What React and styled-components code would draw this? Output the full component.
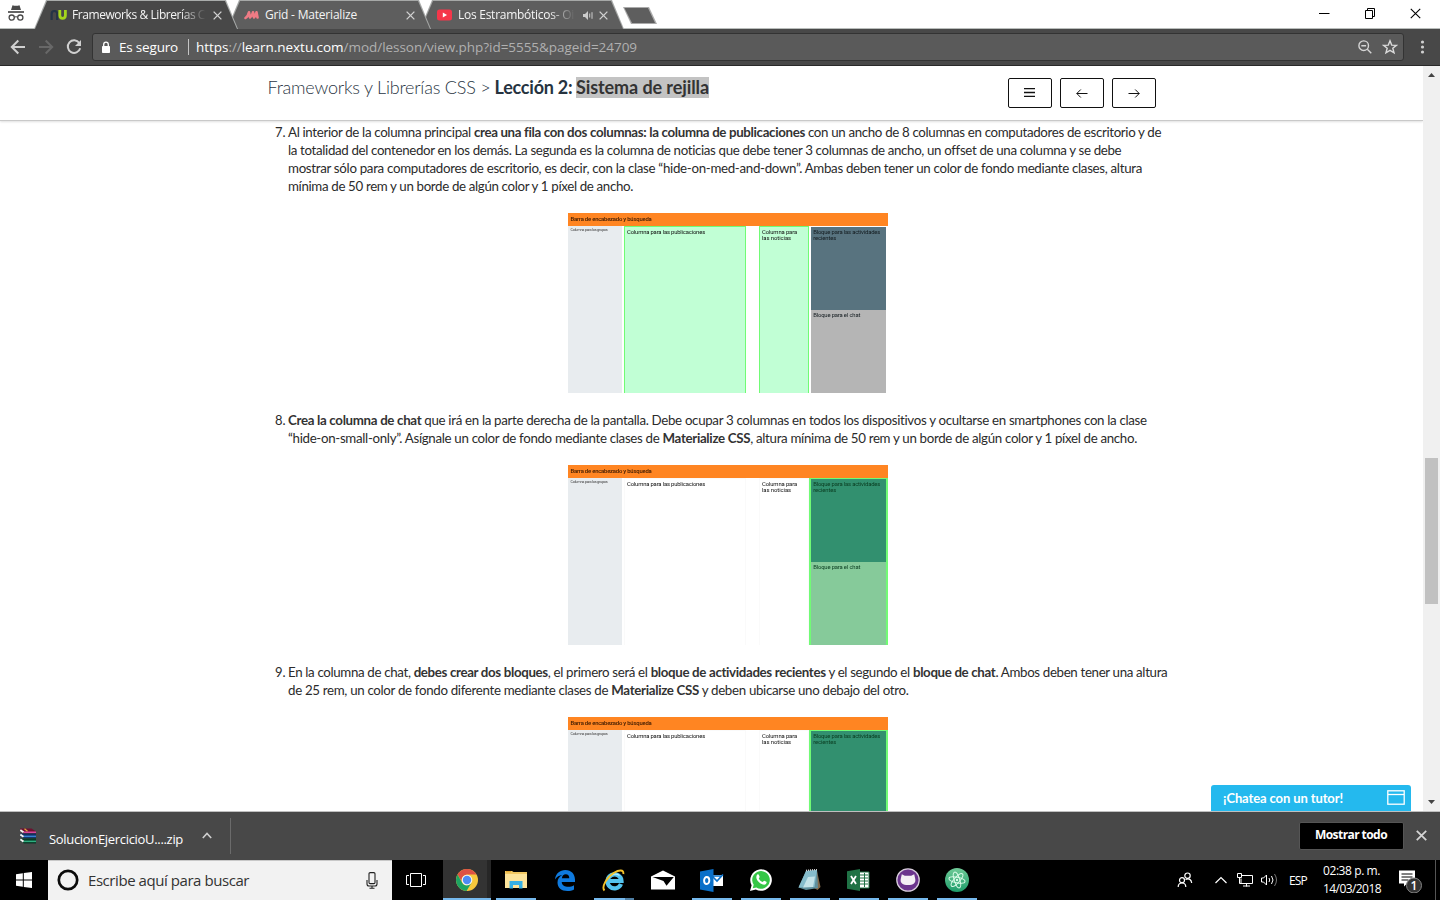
import React, { useLayoutEffect, useRef, useState } from 'react';
import styled, { createGlobalStyle, css } from 'styled-components';

const Global = createGlobalStyle`
  * { box-sizing: border-box; }
  html, body { margin: 0; overflow: hidden; background: #fff; }
  svg { display: block; flex: none; }
`;
const UI = '"Segoe UI", "Open Sans", "Noto Sans", sans-serif';
const LATO = 'Lato, "Liberation Sans", sans-serif';

const FitBox = styled.span`
  display: block;
  width: max-content;
  white-space: nowrap;
`;
// Tracks a line of text out or in so that it fills the given width.
function Fit({ width, children, className }) {
  const ref = useRef(null);
  const [spacing, setSpacing] = useState(0);
  useLayoutEffect(() => {
    const el = ref.current;
    setSpacing((width - el.getBoundingClientRect().width) / el.textContent.length);
  }, [width]);
  return <FitBox ref={ref} className={className} style={{ letterSpacing: `${spacing}px` }}>{children}</FitBox>;
}

const Window = styled.div`
  width: 1440px; height: 900px; overflow: hidden;
  display: flex; flex-direction: column; background: #fff;
  font-family: ${UI};
`;

/* ---- tab strip ---- */
const TabStrip = styled.div`
  height: 29px; flex: none; display: flex; align-items: flex-start;
  border-bottom: 1px solid #b9bdbb; position: relative;
`;
const Incognito = styled.div` width: 34px; height: 28px; padding: 4px 0 0 7px; `;
const TabEdge = styled.div`
  width: 204px; height: 29px; flex: none; margin-right: -11px;
  position: relative; z-index: ${p => p.$z};
  background: ${p => (p.$active ? '#a9acab' : '#a6a8a7')};
  clip-path: polygon(0 100%, 12px 0, 192px 0, 100% 100%);
`;
const TabBody = styled.div`
  height: 29px; display: flex; align-items: center; padding: 1px 0 0 16px;
  background: ${p => (p.$active ? '#484848' : '#5e5e5e')};
  clip-path: polygon(1px 100%, 13px 1px, 191px 1px, 203px 100%);
`;
const Favicon = styled.div` width: 17px; display: flex; justify-content: center; `;
const TabTitle = styled.div`
  width: ${p => p.$w}px; margin-left: 5px; overflow: hidden; color: #f4f4f4;
  font-size: 12px; line-height: 16px;
  ${p => p.$fade && css`mask-image: linear-gradient(90deg, #000 calc(100% - 26px), transparent);`}
`;
const CloseSlot = styled.div` margin-left: auto; padding-right: 16.5px; display: flex; gap: 6px; align-items: center; `;
const NewTab = styled.div`
  width: 34px; height: 17px; margin: 7px 0 0 10px; flex: none;
  background: #aaa; clip-path: polygon(0 0, 26px 0, 100% 100%, 8px 100%);
  &::after { content: ''; display: block; height: 17px; background: #5e5e5e;
    clip-path: polygon(1.5px 1px, 25px 1px, 32px 16px, 9px 16px); }
`;
const WindowButtons = styled.div`
  margin-left: auto; height: 27px; display: flex; padding-right: 19.5px; gap: 34px; align-items: center;
`;

/* ---- toolbar ---- */
const Toolbar = styled.div`
  height: 37px; flex: none; background: #484848; border-bottom: 1px solid #292929;
  display: flex; align-items: center; padding: 0 14px 0 10px;
`;
const NavIcons = styled.div` display: flex; gap: 12px; width: 82px; `;
const Omnibox = styled.div`
  width: 1312px; height: 28px; border: 1px solid #333; border-radius: 3px; background: #5a5a5a;
  display: flex; align-items: center; padding: 0 5px 0 8px; font-size: 13.5px; color: #fff;
`;
const Secure = styled.div` width: 69px; margin-left: 8px; `;
const Rule = styled.div` width: 1px; height: 16px; background: #c4c4c4; margin-right: 7px; `;
const Url = styled.div` color: #b0b0b0; b { font-weight: 400; color: #fff; } `;
const OmniIcons = styled.div` margin-left: auto; display: flex; gap: 9px; align-items: center; `;
const Menu = styled.div` margin-left: auto; `;

/* ---- page ---- */
const Viewport = styled.div` height: 745px; flex: none; display: flex; overflow: hidden; position: relative; `;
const Page = styled.div` width: 1423px; height: 745px; overflow: hidden; font-family: ${LATO}; color: #2b2b2b; `;
const PageHeader = styled.header`
  height: 55px; border-bottom: 1px solid #c9c9c9; box-shadow: 0 1px 2px rgba(0,0,0,.12);
  display: flex; padding-left: 267.5px;
`;
const Crumbs = styled.h1`
  margin: 11px 0 0; width: 740.5px; height: 21px; display: flex; font-size: 18px; line-height: 21px; font-weight: 300; color: #2a3644;
`;
const CrumbCourse = styled.div` width: 227px; `;
const CrumbLesson = styled.div` width: 81.5px; font-weight: 700; color: #26333f; `;
const Selected = styled.div` height: 21px; background: #c3c3c3; font-weight: 700; color: #333; `;
const HeaderButtons = styled.div` display: flex; gap: 8px; padding-top: 12px; `;
const HeaderButton = styled.button`
  width: 44px; height: 30px; padding: 0 1px 1px 0; border: 1px solid #111; border-radius: 2px; background: #fff;
  display: flex; align-items: center; justify-content: center;
`;
const Steps = styled.div` padding: 2px 0 0 272px; `;
const Step = styled.section` display: flex; margin-bottom: 18px; `;
const StepNumber = styled.div` width: 16px; padding-left: 3px; font-size: 13px; line-height: 18px; `;
const StepBody = styled.div` width: 880px; font-size: 13.3px; line-height: 18px; b { font-weight: 700; color: #333; } `;
const Figure = styled.div` margin: 18px 0 0 280px; `;

/* ---- wireframe figure ---- */
const Wire = styled.div`
  width: 320px; height: 180px; background: #fff; font: 400 5.9px/6.3px Roboto, sans-serif; color: #111; overflow: hidden;
`;
const WireBar = styled.div`
  height: 13px; background: #ff8522; padding: 2.7px 0 0 2.5px; color: #3c1a02; font-weight: 500;
`;
const WireRow = styled.div` display: flex; height: 167px; `;
const WireGroups = styled.div` width: 54px; background: #e8ecef; padding: 1px 0 0 2.5px; font-size: 3.9px; line-height: 5px; color: #444; `;
const WireCol = styled.div`
  width: ${p => p.$w}px; margin-left: ${p => p.$ml}px; padding: 2.2px 0 0 2px;
  border: solid ${p => (p.$on ? '#71fb75' : '#fafafa')}; border-width: 1px 1px 0;
  background: ${p => (p.$on ? '#c1ffd5' : '#fff')};
`;
const WireChat = styled.div`
  width: 79px; border: solid ${p => (p.$on ? '#71fb75' : '#fff')}; border-width: 1px 2px 0;
  color: ${p => (p.$on ? '#0a3d21' : '#141c20')};
`;
const WireBlock = styled.div` height: 83px; padding: 2.2px 0 0 2.2px; background: ${p => p.$c}; `;
const Soft = styled.div` filter: blur(.3px); white-space: nowrap; `;

function Wireframe({ chat }) {
  return (
    <Wire>
      <WireBar><Soft><Fit width={81}>Barra de encabezado y búsqueda</Fit></Soft></WireBar>
      <WireRow>
        <WireGroups><Soft><Fit width={37}>Columna para los grupos</Fit></Soft></WireGroups>
        <WireCol $w={122} $ml={2} $on={!chat}><Soft><Fit width={78}>Columna para las publicaciones</Fit></Soft></WireCol>
        <WireCol $w={50} $ml={13} $on={!chat}><Soft><Fit width={35}>Columna para</Fit><Fit width={29}>las noticias</Fit></Soft></WireCol>
        <WireChat $on={chat}>
          <WireBlock $c={chat ? '#32906f' : '#58737f'}><Soft><Fit width={67}>Bloque para las actividades</Fit><Fit width={23}>recientes</Fit></Soft></WireBlock>
          <WireBlock $c={chat ? '#86ca9a' : '#b5b5b5'}><Soft><Fit width={47}>Bloque para el chat</Fit></Soft></WireBlock>
        </WireChat>
      </WireRow>
    </Wire>
  );
}

const Scrollbar = styled.div`
  width: 17px; height: 745px; background: #f0f0f0; display: flex; flex-direction: column; align-items: center;
  padding: 6px 0; svg:last-child { margin-top: auto; }
`;
const Thumb = styled.div` width: 13px; height: 146px; margin-top: 381px; background: #c1c1c1; `;
const ChatTab = styled.div`
  position: absolute; left: 1211px; bottom: 0; width: 200px; height: 26px; background: #24b9ee; border-radius: 3px 3px 0 0;
  display: flex; align-items: center; justify-content: space-between; padding: 0 6px 0 12px;
  font: 700 13px/18px ${LATO}; color: #fff;
`;

/* ---- downloads ---- */
const Downloads = styled.div`
  height: 49px; flex: none; background: #484848; border-top: 1px solid #bfbfbf;
  display: flex; align-items: center; padding: 0 13px 1px 20px; color: #fff; font-size: 13px;
`;
const FileName = styled.div` margin: 6px 19px 0 13px; `;
const DownloadRule = styled.div` width: 1px; height: 36px; background: #6b6b6b; margin-left: 18px; `;
const ShowAll = styled.button`
  margin: 0 12px 0 auto; width: 105px; height: 28px; background: #000; border: 1px solid #555; border-radius: 2px; padding: 0 1px 1px 0;
  color: #fff; font: 700 12px/16px ${UI}; display: flex; align-items: center; justify-content: center;
`;

/* ---- taskbar ---- */
const Taskbar = styled.div` height: 40px; flex: none; background: #000; display: flex; color: #fff; `;
const Start = styled.div` width: 48px; display: flex; align-items: center; justify-content: center; `;
const Search = styled.div`
  width: 344px; background: #f2f2f2; border-top: 1px solid #c8c8c8; display: flex; align-items: center;
  padding: 0 14px 1px 9px; color: #333; font-size: 15px;
`;
const SearchText = styled.div` margin: 0 auto 0 9px; `;
const TaskView = styled.div` width: 51px; display: flex; align-items: center; padding-left: 14px; `;
const TaskApp = styled.div`
  width: 49px; height: 40px; display: flex; align-items: center; justify-content: center;
  padding-right: 2px; position: relative;
  ${p => p.$active && css`background: linear-gradient(90deg, #333 44px, #262626 44px 48px, #000 48px);`}
  &::after {
    content: ''; position: absolute; bottom: 0; height: 2px; background: #76b9ed;
    left: ${p => (p.$active ? 0 : 4)}px; width: ${p => (p.$active ? 48 : 40)}px;
    display: ${p => (p.$open || p.$active ? 'block' : 'none')};
    ${p => p.$stack && css`background: linear-gradient(90deg, #76b9ed 31px, #4f7fa5 31px);`}
  }
`;
const Tray = styled.div` margin-left: auto; width: 264px; display: flex; align-items: center; `;
const TrayGap = styled.div` width: ${p => p.$w}px; flex: none; `;
const Lang = styled.div` font-size: 12px; width: 34px; `;
const Clock = styled.div` font-size: 12px; line-height: 18px; width: 75px; `;
const Desktop = styled.div` margin-left: auto; width: 5px; height: 40px; border-left: 1px solid #555; `;

const Close = ({ s = 9, c = '#cfcfcf', w = 1.5 }) => (
  <svg width={s} height={s} viewBox="0 0 10 10"><path d="M.7.7l8.6 8.6M9.3.7L.7 9.3" stroke={c} strokeWidth={w} fill="none" /></svg>
);
const Arrow = ({ c, flip }) => (
  <svg width="16" height="16" viewBox="0 0 16 16"><path transform={flip ? 'translate(16 0) scale(-1 1)' : undefined} d="M15 8H2.2M8.3 1.5L1.8 8l6.5 6.5" stroke={c} strokeWidth="2" fill="none" /></svg>
);
const ThinArrow = ({ flip }) => (
  <svg width="12" height="10" viewBox="0 0 12 10"><path transform={flip ? 'translate(12 0) scale(-1 1)' : undefined} d="M11.5 5.5H.8M4.8 1.5l-4 4 4 4" stroke="#111" fill="none" /></svg>
);

function Tabs() {
  return (
    <TabStrip>
      <Incognito>
        <svg width="18" height="18" viewBox="0 0 18 18" fill="none" stroke="#4a4a4a">
          <path d="M5.5 1.2q3.5 1 7 0l1.500 4.800H4z" fill="#4a4a4a" stroke="none" /><path d="M1 8h16" strokeWidth="1.7" />
          <circle cx="4.7" cy="13.6" r="2.6" strokeWidth="1.3" /><circle cx="13.3" cy="13.6" r="2.6" strokeWidth="1.3" /><path d="M7.3 13.2q1.7-1 3.4 0" />
        </svg>
      </Incognito>
      <TabEdge $active $z={3}><TabBody $active>
        <Favicon><svg width="17" height="12" viewBox="0 0 17 12" fill="none" strokeWidth="2.8">
          <path d="M1.6 11V5.2Q1.6 2 4.4 2T7.2 5.2V11" stroke="#243447" strokeWidth="2.2" /><path d="M9.8 1v5.3q0 3 2.8 3t2.8-3V1" stroke="#a4d51c" />
        </svg></Favicon>
        <TabTitle $w={134} $fade><Fit width={133}>Frameworks &amp; Librerías C</Fit></TabTitle><CloseSlot><Close /></CloseSlot>
      </TabBody></TabEdge>
      <TabEdge $z={2}><TabBody>
        <Favicon><svg width="15" height="10" viewBox="0 0 15 10" fill="none" stroke="#ee7b85" strokeWidth="2.6" strokeLinejoin="round" strokeLinecap="round">
          <path d="M1.5 8Q4 6.5 5 2.200L6 7.5Q8.200 6 9 2.200L10 7.5Q12 5 12.500 2.200L13.500 7.500" />
        </svg></Favicon>
        <TabTitle $w={130}><Fit width={92}>Grid - Materialize</Fit></TabTitle><CloseSlot><Close /></CloseSlot>
      </TabBody></TabEdge>
      <TabEdge $z={1}><TabBody>
        <Favicon><svg width="15" height="12" viewBox="0 0 15 12"><rect width="15" height="11" y=".5" rx="2.5" fill="#f5364a" /><path d="M5.8 3.5L10 6 5.8 8.5z" fill="#fff" /></svg></Favicon>
        <TabTitle $w={117} $fade><Fit width={116}>Los Estrambóticos- Oi</Fit></TabTitle>
        <CloseSlot>
          <svg width="10" height="9" viewBox="0 0 10 9"><path d="M0 3h2l3-3v9L2 6H0z" fill="#ccc" /><path d="M6.7 2.5v4M9 1.2v6.6" stroke="#ccc" /></svg>
          <Close />
        </CloseSlot>
      </TabBody></TabEdge>
      <NewTab />
      <WindowButtons>
        <svg width="11" height="11"><path d="M0 5.5h10.5" stroke="#000" /></svg>
        <svg width="12" height="11" viewBox="0 0 12 11" fill="none" stroke="#000"><path d="M1.5 2.5h7v8h-7zM3.5 2.5v-2h7v8h-2" /></svg>
        <Close s={11} c="#000" w={1} />
      </WindowButtons>
    </TabStrip>
  );
}

function AddressBar() {
  return (
    <Toolbar>
      <NavIcons>
        <Arrow c="#d0d0d0" /><Arrow c="#686868" flip />
        <svg width="16" height="16" viewBox="0 0 16 16"><path d="M13.3 4A6.3 6.3 0 1 0 14.2 9.3" stroke="#d0d0d0" strokeWidth="2" fill="none" /><path d="M15 1v6H9z" fill="#d0d0d0" /></svg>
      </NavIcons>
      <Omnibox>
        <svg width="10" height="13" viewBox="0 0 10 13"><rect x="1" y="5" width="8" height="7" rx=".8" fill="#fff" /><path d="M2.7 5.5V3.5a2.3 2.3 0 0 1 4.6 0v2" stroke="#fff" strokeWidth="1.3" fill="none" /></svg>
        <Secure><Fit width={59}>Es seguro</Fit></Secure><Rule />
        <Url><Fit width={441}><b>https</b>://<b>learn.nextu.com</b>/mod/lesson/view.php?id=5555&amp;pageid=24709</Fit></Url>
        <OmniIcons>
          <svg width="16" height="16" viewBox="0 0 16 16" fill="none" stroke="#d5d5d5" strokeWidth="1.4"><circle cx="6.7" cy="6.7" r="4.8" /><path d="M4.3 6.7h4.8M10.3 10.3l4 4" /></svg>
          <svg width="16" height="16" viewBox="0 0 16 16" fill="none" stroke="#dadada" strokeWidth="1.4"><path d="M8 1.8l1.7 4.3 4.7.3-3.6 2.9 1.2 4.5L8 11.3l-4 2.5 1.2-4.5L1.6 6.4l4.7-.3z" /></svg>
        </OmniIcons>
      </Omnibox>
      <Menu><svg width="8" height="16" viewBox="0 0 8 16" fill="#d0d0d0"><circle cx="4.5" cy="3" r="1.6" /><circle cx="4.5" cy="8" r="1.6" /><circle cx="4.5" cy="13" r="1.6" /></svg></Menu>
    </Toolbar>
  );
}

const steps = [
  { n: 7, chat: false, lines: [
    [873, <>Al interior de la columna principal <b>crea una fila con dos columnas: la columna de publicaciones</b> con un ancho de 8 columnas en computadores de escritorio y de</>],
    [833, 'la totalidad del contenedor en los demás. La segunda es la columna de noticias que debe tener 3 columnas de ancho, un offset de una columna y se debe'],
    [854, 'mostrar sólo para computadores de escritorio, es decir, con la clase “hide-on-med-and-down”. Ambas deben tener un color de fondo mediante clases, altura'],
    [345, 'mínima de 50 rem y un borde de algún color y 1 píxel de ancho.'],
  ] },
  { n: 8, chat: true, lines: [
    [859, <><b>Crea la columna de chat</b> que irá en la parte derecha de la pantalla. Debe ocupar 3 columnas en todos los dispositivos y ocultarse en smartphones con la clase</>],
    [849, <>“hide-on-small-only”. Asígnale un color de fondo mediante clases de <b>Materialize CSS</b>, altura mínima de 50 rem y un borde de algún color y 1 píxel de ancho.</>],
  ] },
  { n: 9, chat: true, lines: [
    [879.5, <>En la columna de chat, <b>debes crear dos bloques</b>, el primero será el <b>bloque de actividades recientes</b> y el segundo el <b>bloque de chat</b>. Ambos deben tener una altura</>],
    [620.5, <>de 25 rem, un color de fondo diferente mediante clases de <b>Materialize CSS</b> y deben ubicarse uno debajo del otro.</>],
  ] },
];

function Lesson() {
  return (
    <Viewport>
      <Page>
        <PageHeader>
          <Crumbs>
            <CrumbCourse><Fit width={223}>Frameworks y Librerías CSS &gt;</Fit></CrumbCourse>
            <CrumbLesson><Fit width={78}>Lección 2:</Fit></CrumbLesson>
            <Selected><Fit width={133}>Sistema de rejilla</Fit></Selected>
          </Crumbs>
          <HeaderButtons>
            <HeaderButton><svg width="11" height="9"><path d="M0 .5h11M0 4.5h11M0 8.5h11" stroke="#111" strokeWidth="1.4" /></svg></HeaderButton>
            <HeaderButton><ThinArrow /></HeaderButton>
            <HeaderButton><ThinArrow flip /></HeaderButton>
          </HeaderButtons>
        </PageHeader>
        <Steps>
          {steps.map(s => (
            <Step key={s.n}>
              <StepNumber>{s.n}.</StepNumber>
              <StepBody>
                {s.lines.map(([w, t], i) => <Fit key={i} width={w}>{t}</Fit>)}
                <Figure><Wireframe chat={s.chat} /></Figure>
              </StepBody>
            </Step>
          ))}
        </Steps>
      </Page>
      <Scrollbar>
        <svg width="7" height="5"><path d="M0 5L3.5 1 7 5z" fill="#444" /></svg>
        <Thumb />
        <svg width="7" height="5"><path d="M0 0L3.5 4 7 0z" fill="#444" /></svg>
      </Scrollbar>
      <ChatTab><Fit width={120}>¡Chatea con un tutor!</Fit>
        <svg width="18" height="16" fill="none" stroke="#fff"><rect x=".8" y=".8" width="16.4" height="13.4" strokeWidth="1.3" /><path d="M1 4.5h16" strokeWidth="1.3" /></svg>
      </ChatTab>
    </Viewport>
  );
}

function DownloadBar() {
  return (
    <Downloads>
      <svg width="16" height="16" viewBox="0 0 16 16">
        <path d="M0 .5h11.500L16 3.500V5.500H4L0 3z" fill="#6d1030" /><path d="M3.500 3.500H16v1.500H3.500z" fill="#d8479b" />
        <path d="M0 5.500h3.500L16 5.500V10.300H4L0 8z" fill="#122f63" /><path d="M3.500 7.600H16v1.500H3.500z" fill="#3a82cf" />
        <path d="M0 10.500L16 10.300V15.600H4L0 13z" fill="#083a26" /><path d="M3.500 12.600H16v1.500H3.500z" fill="#2fae80" />
        <path d="M.3 2l3.200 2.200M.3 6.600l3.200 2.200M.3 11.400l3.200 2.200" stroke="#f2f2f2" strokeWidth="1.900" /><path d="M4.500.7l3 2.500" stroke="#e3a53c" strokeWidth="1.200" />
      </svg>
      <FileName><Fit width={134}>SolucionEjercicioU....zip</Fit></FileName>
      <svg width="10" height="7" viewBox="0 0 10 7"><path d="M.8 6L5 1.5 9.2 6" stroke="#cfcfcf" strokeWidth="1.6" fill="none" /></svg>
      <DownloadRule />
      <ShowAll><Fit width={72}>Mostrar todo</Fit></ShowAll>
      <Close s={11} c="#d5d5d5" w={1.6} />
    </Downloads>
  );
}

const ChromeIcon = () => (
  <svg width="22" height="22" viewBox="0 0 22 22"><circle cx="11" cy="11" r="11" fill="#f7c83c" /><path d="M1.5 5.5A11 11 0 0 1 20.5 5.5H11A5.5 5.5 0 0 0 6 13z" fill="#dd5144" /><path d="M1.5 5.5A11 11 0 0 0 10.5 22l5-8.2-4.5 2.7a5.5 5.5 0 0 1-5-3z" fill="#1da462" /><circle cx="11" cy="11" r="5.3" fill="#f4f4f4" /><circle cx="11" cy="11" r="4.2" fill="#4c8bf5" /></svg>
);
const FolderIcon = () => (
  <svg width="22" height="20" viewBox="0 0 22 20"><path d="M0 1h7l1.5 1H22v16H0z" fill="#f2c862" /><path d="M0 4h22v14H0z" fill="#fde49b" /><path d="M4.5 18.5V11h13v7.5h-3.5V15H8v3.5z" fill="#36b0e4" /><path d="M1 1h5v1.2H1z" fill="#e6aa32" /></svg>
);
const EdgeIcon = () => (
  <svg width="20" height="21" viewBox="0 0 20 21"><path d="M0 9.5C.6 3.5 5 0 10.3 0 16.5 0 20 4.3 20 9.8V12H6.7c.2 3.3 3.3 4.8 6.5 4.8 2.3 0 4.2-.6 5.8-1.6v4.3C17.2 20.5 14.900 21 12.4 21 6.3 21 2.5 17.6 2.5 12.5c0-3.300 1.900-6 4.800-7.400C4.4 5.300 1.600 7 0 9.500zM6.900 8.200h7.400c0-2.500-1.300-4-3.500-4S7.200 5.800 6.900 8.200z" fill="#0f7ade" fillRule="evenodd" /></svg>
);
const IEIcon = () => (
  <svg width="23" height="23" viewBox="0 0 23 23" fill="none"><path d="M19 15a7 7 0 1 1 .5-3H7" stroke="#54c4ef" strokeWidth="4.2" /><path d="M17.5 6.500a7.500 7.500 0 0 0-11 3" stroke="#b5ebfb" strokeWidth="1.2" /><path d="M2.5 21.5C-1 18 5 8 12 3.7 17 .8 22 .3 21.3 5" stroke="#f5c229" strokeWidth="1.9" /></svg>
);
const MailIcon = () => (
  <svg width="24" height="20" viewBox="0 0 24 20"><path d="M0 6.5L12 .5l12 6V19.5H0z" fill="#fff" /><path d="M1.5 7h21.3L15.5 15.800 12.500 11z" fill="#000" /></svg>
);
const OutlookIcon = () => (
  <svg width="24" height="23" viewBox="0 0 24 23"><path d="M11 6h12v11H11z" fill="#fff" /><path d="M12 7h10M13 8l4 4 6-6.5" stroke="#0b70c8" strokeWidth="1.6" fill="none" /><path d="M0 2.5L13.5 0v23L0 20.5z" fill="#0a70c9" /><ellipse cx="6.7" cy="11.5" rx="2.6" ry="3.5" fill="none" stroke="#fff" strokeWidth="1.9" /></svg>
);
const WhatsIcon = () => (
  <svg width="22" height="22" viewBox="0 0 22 22"><path d="M0 22l1.6-5.700A10.8 10.8 0 1 1 5.8 20.500z" fill="#fff" /><path d="M2.7 19.3l1-3.500A8.8 8.8 0 1 1 6.4 18.400z" fill="#35c747" /><path d="M7.3 5.600c.6-.5 1.200-.4 1.500.2l.8 2c.2.5-.8 1.300-.8 1.600.8 1.700 2.200 2.800 3.900 3.500.5 0 1.100-1.400 1.600-1.200l2.100 1c.6.4 0 2.100-.8 2.600-1.500.9-3.900.2-6.300-1.800C6.500 11.100 5.300 8.200 7.300 5.600z" fill="#fff" /></svg>
);
const NotepadIcon = () => (
  <svg width="24" height="22" viewBox="0 0 24 22"><path d="M19 2l3.5 16-3 3L16 19z" fill="#83694a" /><path d="M8 2l11-1 1 18-12 2-7.5-2.5z" fill="#5f8f9c" /><path d="M8 2l11-1-2.500 17-16 .5z" fill="#86bccb" /><path d="M10 8l7-.5L15 18l-10 .5z" fill="#d5ecef" opacity=".8" /><path d="M8 1.5l11-1" stroke="#d9d9d9" strokeDasharray="1 1" strokeWidth="1.6" /></svg>
);
const ExcelIcon = () => (
  <svg width="23" height="22" viewBox="0 0 23 22"><path d="M12 3h10v16H12z" fill="#fff" stroke="#1f7245" /><path d="M13 6h8M13 9h8M13 12h8M13 15h8M17.5 4v14" stroke="#1f7245" /><path d="M0 2.3L13 0v22L0 19.7z" fill="#1f7245" /><path d="M4 7l5 8M9 7l-5 8" stroke="#fff" strokeWidth="1.8" /></svg>
);
const GithubIcon = () => (
  <svg width="24" height="24" viewBox="0 0 24 24"><circle cx="12" cy="12" r="11.2" fill="#6b348d" stroke="#d5cbd9" strokeWidth="1.3" /><path d="M5.8 6.2l3 1.600h6.400l3-1.600.9 4c1.300 5-2 6.800-7.100 6.800s-8.400-1.800-7.100-6.800z" fill="#f3eef4" /></svg>
);
const AtomIcon = () => (
  <svg width="24" height="24" viewBox="0 0 24 24" fill="none" stroke="#dcfbe9" strokeWidth="1">
    <defs><linearGradient id="disc" x2="0" y2="1"><stop stopColor="#70cb98" /><stop offset="1" stopColor="#1e9d6a" /></linearGradient></defs>
    <circle cx="12" cy="12" r="12" fill="url(#disc)" stroke="none" />
    <ellipse cx="12" cy="12" rx="8.2" ry="2.7" transform="rotate(12 12 12)" /><ellipse cx="12" cy="12" rx="8.2" ry="2.7" transform="rotate(72 12 12)" /><ellipse cx="12" cy="12" rx="8.2" ry="2.7" transform="rotate(132 12 12)" />
    <circle cx="12" cy="12" r="1.2" fill="#dcfbe9" stroke="none" />
  </svg>
);

const apps = [
  { id: 'chrome', icon: <ChromeIcon />, active: true }, { id: 'files', icon: <FolderIcon />, open: true },
  { id: 'edge', icon: <EdgeIcon /> }, { id: 'ie', icon: <IEIcon />, open: true, stack: true }, { id: 'mail', icon: <MailIcon /> },
  { id: 'outlook', icon: <OutlookIcon />, open: true }, { id: 'whatsapp', icon: <WhatsIcon />, open: true },
  { id: 'notepad', icon: <NotepadIcon />, open: true }, { id: 'excel', icon: <ExcelIcon />, open: true },
  { id: 'github', icon: <GithubIcon />, open: true }, { id: 'atom', icon: <AtomIcon />, open: true },
];

function TaskbarRow() {
  return (
    <Taskbar>
      <Start><svg width="16" height="16" viewBox="0 0 16 16" fill="#fff"><path d="M0 2.2L6.8 1.3v6.2H0zM7.8 1.1L16 0v7.5H7.800zM0 8.5h6.800v6.200L0 13.800zM7.800 8.500H16V16l-8.200-1.100z" /></svg></Start>
      <Search>
        <svg width="22" height="22"><circle cx="11" cy="11" r="9.2" fill="none" stroke="#0b0b0b" strokeWidth="2.7" /></svg>
        <SearchText><Fit width={161}>Escribe aquí para buscar</Fit></SearchText>
        <svg width="12" height="17" viewBox="0 0 12 17" fill="none" stroke="#222" strokeWidth="1.1"><rect x="3" y=".6" width="6" height="11" rx="1.2" /><path d="M1 8v4q0 2 2 2h6q2 0 2-2V8M6 14v2.3M3.5 16.3h5" /></svg>
      </Search>
      <TaskView><svg width="20" height="14" fill="none" stroke="#fff"><path d="M4.5.5h11v13h-11zM3 2.5H.5v9H3M17 2.5h2.5v9H17" /></svg></TaskView>
      {apps.map(a => <TaskApp key={a.id} $active={a.active} $open={a.open} $stack={a.stack}>{a.icon}</TaskApp>)}
      <Tray>
        <TrayGap $w={1} />
        <svg width="16" height="16" viewBox="0 0 16 16" fill="none" stroke="#fff" strokeWidth="1.2"><circle cx="10.5" cy="3.7" r="2.7" /><path d="M8.5 7.5Q14 5.5 14.7 11" /><circle cx="5" cy="8.2" r="2.5" /><path d="M1.2 15q0-4 3.8-4t3.8 4" /></svg>
        <TrayGap $w={22} />
        <svg width="12" height="8" viewBox="0 0 12 8"><path d="M.5 7L6 1.5 11.5 7" stroke="#fff" strokeWidth="1.2" fill="none" /></svg>
        <TrayGap $w={10} />
        <svg width="16" height="14" viewBox="0 0 16 14" fill="none" stroke="#fff"><path d="M5 2.5h10.5v8H4V5.5M.5.5h4v4h-4zM2.5 4.5v6H4M9.5 10.5v3M6 13h7" /></svg>
        <TrayGap $w={8} />
        <svg width="17" height="14" viewBox="0 0 17 14" fill="none" stroke="#fff"><path d="M.5 5h2l3-3v10l-3-3h-2zM8 5q1.5 2 0 4M10.5 3q3 4 0 8" /><path d="M13.5 1q4 6 0 12" stroke="#777" /></svg>
        <TrayGap $w={11} />
        <Lang><Fit width={18}>ESP</Fit></Lang>
        <Clock><Fit width={57}>02:38 p. m.</Fit><Fit width={58}>14/03/2018</Fit></Clock>
        <svg width="26" height="26" viewBox="0 0 26 26"><path d="M1 3.5h16v13H9l-3 3v-3H1z" fill="#fff" /><path d="M3.5 7h11M3.5 10h11M3.5 13h7" stroke="#000" /><circle cx="16" cy="18.5" r="7.5" fill="#343434" stroke="#858585" /><text x="16" y="22.8" textAnchor="middle" fontSize="12" fontWeight="600" fill="#fff">1</text></svg>
        <Desktop />
      </Tray>
    </Taskbar>
  );
}

export default function App() {
  return (
    <Window>
      <Global />
      <Tabs />
      <AddressBar />
      <Lesson />
      <DownloadBar />
      <TaskbarRow />
    </Window>
  );
}
